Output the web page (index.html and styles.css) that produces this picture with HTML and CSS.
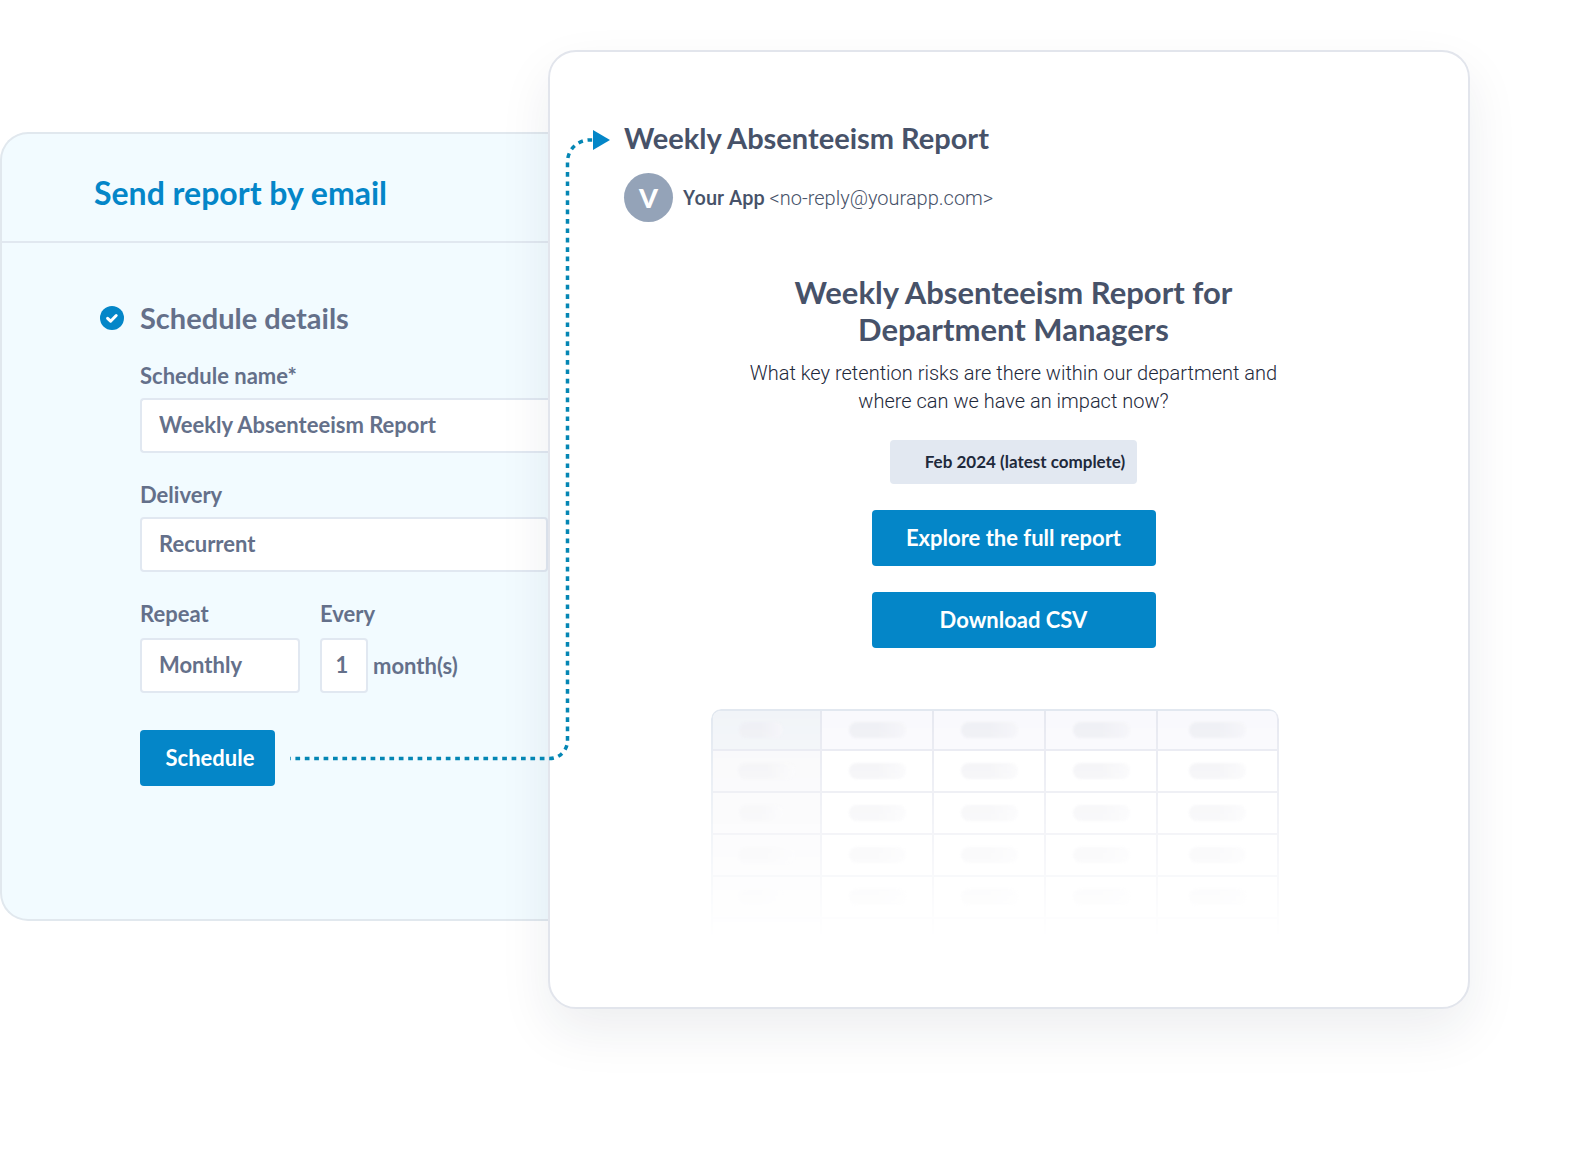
FILE: index.html
```
<!DOCTYPE html>
<html lang="en">
<head>
  <meta charset="UTF-8">
  <meta name="viewport" content="width=device-width, initial-scale=1.0">
  <title>Send report by email</title>
  <link rel="stylesheet" href="styles.css">
</head>
<body>
  <main class="stage">
    <section class="panel">
      <header class="panel-header">
        <h1>Send report by email</h1>
      </header>
      <form class="panel-body">
        <h2>
          <svg class="check" viewBox="0 0 24 24" aria-hidden="true">
            <circle cx="12" cy="12" r="12" fill="#0486c8"/>
            <path d="M7.6 12.3l3 2.9 5.6-5.7" fill="none" stroke="#fff" stroke-width="3" stroke-linecap="round" stroke-linejoin="round"/>
          </svg>
          Schedule details
        </h2>
        <div class="field">
          <label for="name">Schedule name*</label>
          <input class="open-end" type="text" id="name" value="Weekly Absenteeism Report">
        </div>
        <div class="field">
          <label for="delivery">Delivery</label>
          <select id="delivery"><option>Recurrent</option></select>
        </div>
        <div class="row">
          <div class="field repeat">
            <label for="repeat">Repeat</label>
            <select id="repeat"><option>Monthly</option></select>
          </div>
          <div class="field">
            <label for="every">Every</label>
            <div class="every">
              <input type="text" id="every" value="1">
              <span>month(s)</span>
            </div>
          </div>
        </div>
        <button class="btn btn-schedule" type="button">Schedule</button>
      </form>
    </section>

    <article class="mail">
      <!-- dotted arrow from the Schedule button to the mail subject -->
      <svg class="connector" viewBox="0 0 324 640" aria-hidden="true">
        <path d="M-1 628.500H259A18 18 0 0 0 277.500 610V32A22 22 0 0 1 299 10H304" fill="none" stroke="#0486b4" stroke-width="3.5" stroke-dasharray="4.7 4.7" stroke-dashoffset="3"/>
        <path d="M303 0L320 10L303 20Z" fill="#0486c8"/>
      </svg>
      <h2 class="subject">Weekly Absenteeism Report</h2>
      <div class="sender">
        <span class="avatar">V</span>
        <p><strong>Your App</strong> &lt;no-reply@yourapp.com&gt;</p>
      </div>
      <div class="content">
        <h3>Weekly Absenteeism Report for<br>Department Managers</h3>
        <p class="question">What key retention risks are there within our department and<br>where can we have an impact now?</p>
        <span class="period">Feb 2024 (latest complete)</span>
        <button class="btn btn-wide" type="button">Explore the full report</button>
        <button class="btn btn-wide" type="button">Download CSV</button>
      </div>
      <table class="preview" aria-hidden="true">
        <thead>
          <tr><th><i class="short"></i></th><th><i></i></th><th><i></i></th><th><i></i></th><th><i></i></th></tr>
        </thead>
        <tbody>
          <tr><td><i></i></td><td><i></i></td><td><i></i></td><td><i></i></td><td><i></i></td></tr>
          <tr><td><i class="short"></i></td><td><i></i></td><td><i></i></td><td><i></i></td><td><i></i></td></tr>
          <tr><td><i></i></td><td><i></i></td><td><i></i></td><td><i></i></td><td><i></i></td></tr>
          <tr><td><i class="short"></i></td><td><i></i></td><td><i></i></td><td><i></i></td><td><i></i></td></tr>
          <tr><td></td><td></td><td></td><td></td><td></td></tr>
        </tbody>
      </table>
    </article>
  </main>
</body>
</html>
```
FILE: styles.css
```
* {
  box-sizing: border-box;
  margin: 0;
  padding: 0;
}
body {
  background: #fff;
  color: #64708a;
  font-family: Lato, "Open Sans", sans-serif;
  font-size: 22px;
  font-weight: 700;
  overflow-x: hidden;
}
.stage {
  display: grid;
  grid-template-columns: 548fr 922fr 101fr;
  align-items: start;
  padding: 50px 0 80px;
}

/* schedule form */
.panel {
  margin-top: 82px;
  background: #f2fbff;
  border: 2px solid #e1e8ee;
  border-right: none;
  border-radius: 28px 0 0 28px;
  min-width: 0;
}
.panel-header {
  padding: 39px 92px 28px;
  border-bottom: 2px solid #e1e8f0;
}
h1 {
  color: #0486c8;
  font-size: 32px;
  line-height: 40px;
}
.panel-body {
  padding: 57px 0 133px 138px;
}
.panel-body h2 {
  display: flex;
  align-items: center;
  gap: 16px;
  margin: 0 0 28px -40px;
  font-size: 29px;
  line-height: 36px;
}
.check {
  width: 24px;
  height: 24px;
}
.field {
  margin-bottom: 30px;
}
label {
  display: block;
  line-height: 24px;
  margin-bottom: 10px;
}
input, select {
  display: block;
  width: 100%;
  height: 55px;
  padding: 0 17px 2px;
  background: #fff;
  border: 2px solid #e1e8f1;
  border-radius: 4px;
  color: inherit;
  font: inherit;
  appearance: none;
}
.open-end {
  border-right: none;
  border-radius: 4px 0 0 4px;
}
.row {
  display: flex;
  gap: 20px;
}
.row .field {
  margin-bottom: 37px;
}
.row label {
  margin-bottom: 12px;
}
.repeat {
  width: 160px;
}
.every {
  display: flex;
  align-items: center;
  gap: 5px;
}
.every input {
  width: 48px;
  padding: 0 4px 2px 0;
  text-align: center;
}
.btn {
  height: 56px;
  padding-bottom: 2px;
  border: none;
  border-radius: 4px;
  background: #0486c8;
  color: #fff;
  font: inherit;
  cursor: pointer;
}
.btn-schedule {
  width: 135px;
  padding-left: 5px;
}

/* mail */
.mail {
  position: relative;
  padding: 68px 65px 68px 74px;
  background: #fff;
  border: 2px solid #e2e5ec;
  border-radius: 28px;
  box-shadow: 0 22px 52px rgba(30, 41, 70, 0.08);
  color: #475269;
}
.connector {
  position: absolute;
  left: -260px;
  top: 78px;
  width: 324px;
  height: 640px;
  pointer-events: none;
}
.subject {
  font-size: 29px;
  line-height: 36px;
}
.sender {
  display: flex;
  align-items: center;
  gap: 10px;
  margin-top: 17px;
  font-family: Roboto, sans-serif;
  font-size: 20px;
  font-weight: 300;
}
.sender strong {
  font-weight: 500;
}
.avatar {
  width: 49px;
  height: 49px;
  border-radius: 50%;
  background: #94a3b8;
  color: #fff;
  font-family: Lato, sans-serif;
  font-size: 27px;
  font-weight: 900;
  line-height: 49px;
  text-align: center;
}
.content {
  display: flex;
  flex-direction: column;
  align-items: center;
  gap: 26px;
  margin-top: 52px;
  text-align: center;
}
h3 {
  font-size: 31px;
  line-height: 37px;
}
.question {
  margin: -15px 0 -1px;
  color: #1e293b;
  font-family: Roboto, sans-serif;
  font-size: 20px;
  font-weight: 300;
  line-height: 28px;
}
.period {
  width: 247px;
  padding: 0 10px 0 33px;
  background: #e2e8f1;
  border-radius: 4px;
  color: #1e293b;
  font-size: 17px;
  line-height: 44px;
  white-space: nowrap;
}
.btn-wide {
  width: 284px;
}
.preview {
  width: 568px;
  margin: 61px 0 0 87px;
  table-layout: fixed;
  border-collapse: separate;
  border-spacing: 0;
  border: solid #e2e8f0;
  border-width: 2px 0 0 2px;
  border-radius: 10px 10px 0 0;
  overflow: hidden;
  -webkit-mask-image: linear-gradient(#000, rgba(0, 0, 0, 0.5) 50%, transparent);
  mask-image: linear-gradient(#000, rgba(0, 0, 0, 0.5) 50%, transparent);
}
.preview th,
.preview td {
  height: 42px;
  width: 112px;
  border: solid #e6e8f0;
  border-width: 0 2px 2px 0;
}
.preview th {
  height: 40px;
  background: #f9f9fd;
}
.preview th:last-child {
  border-top-right-radius: 8px;
}
.preview tr > :first-child {
  width: 109px;
  background: #f8f8fa;
}
.preview thead tr > :first-child {
  background: #f1f4f8;
}
.preview tr > :last-child {
  width: 121px;
}
.preview tbody tr:last-child td {
  height: 20px;
  border-bottom: none;
}
.preview i {
  display: block;
  width: 57px;
  height: 16px;
  margin: 0 auto;
  border-radius: 8px;
  background: linear-gradient(90deg, #f2f2f5 50%, #f9f9fb);
  filter: blur(1px);
}
.preview i.short {
  width: 44px;
  margin-left: 26px;
}
.preview thead i {
  background: linear-gradient(90deg, #eeeff4 50%, #f5f5f9);
}
```
